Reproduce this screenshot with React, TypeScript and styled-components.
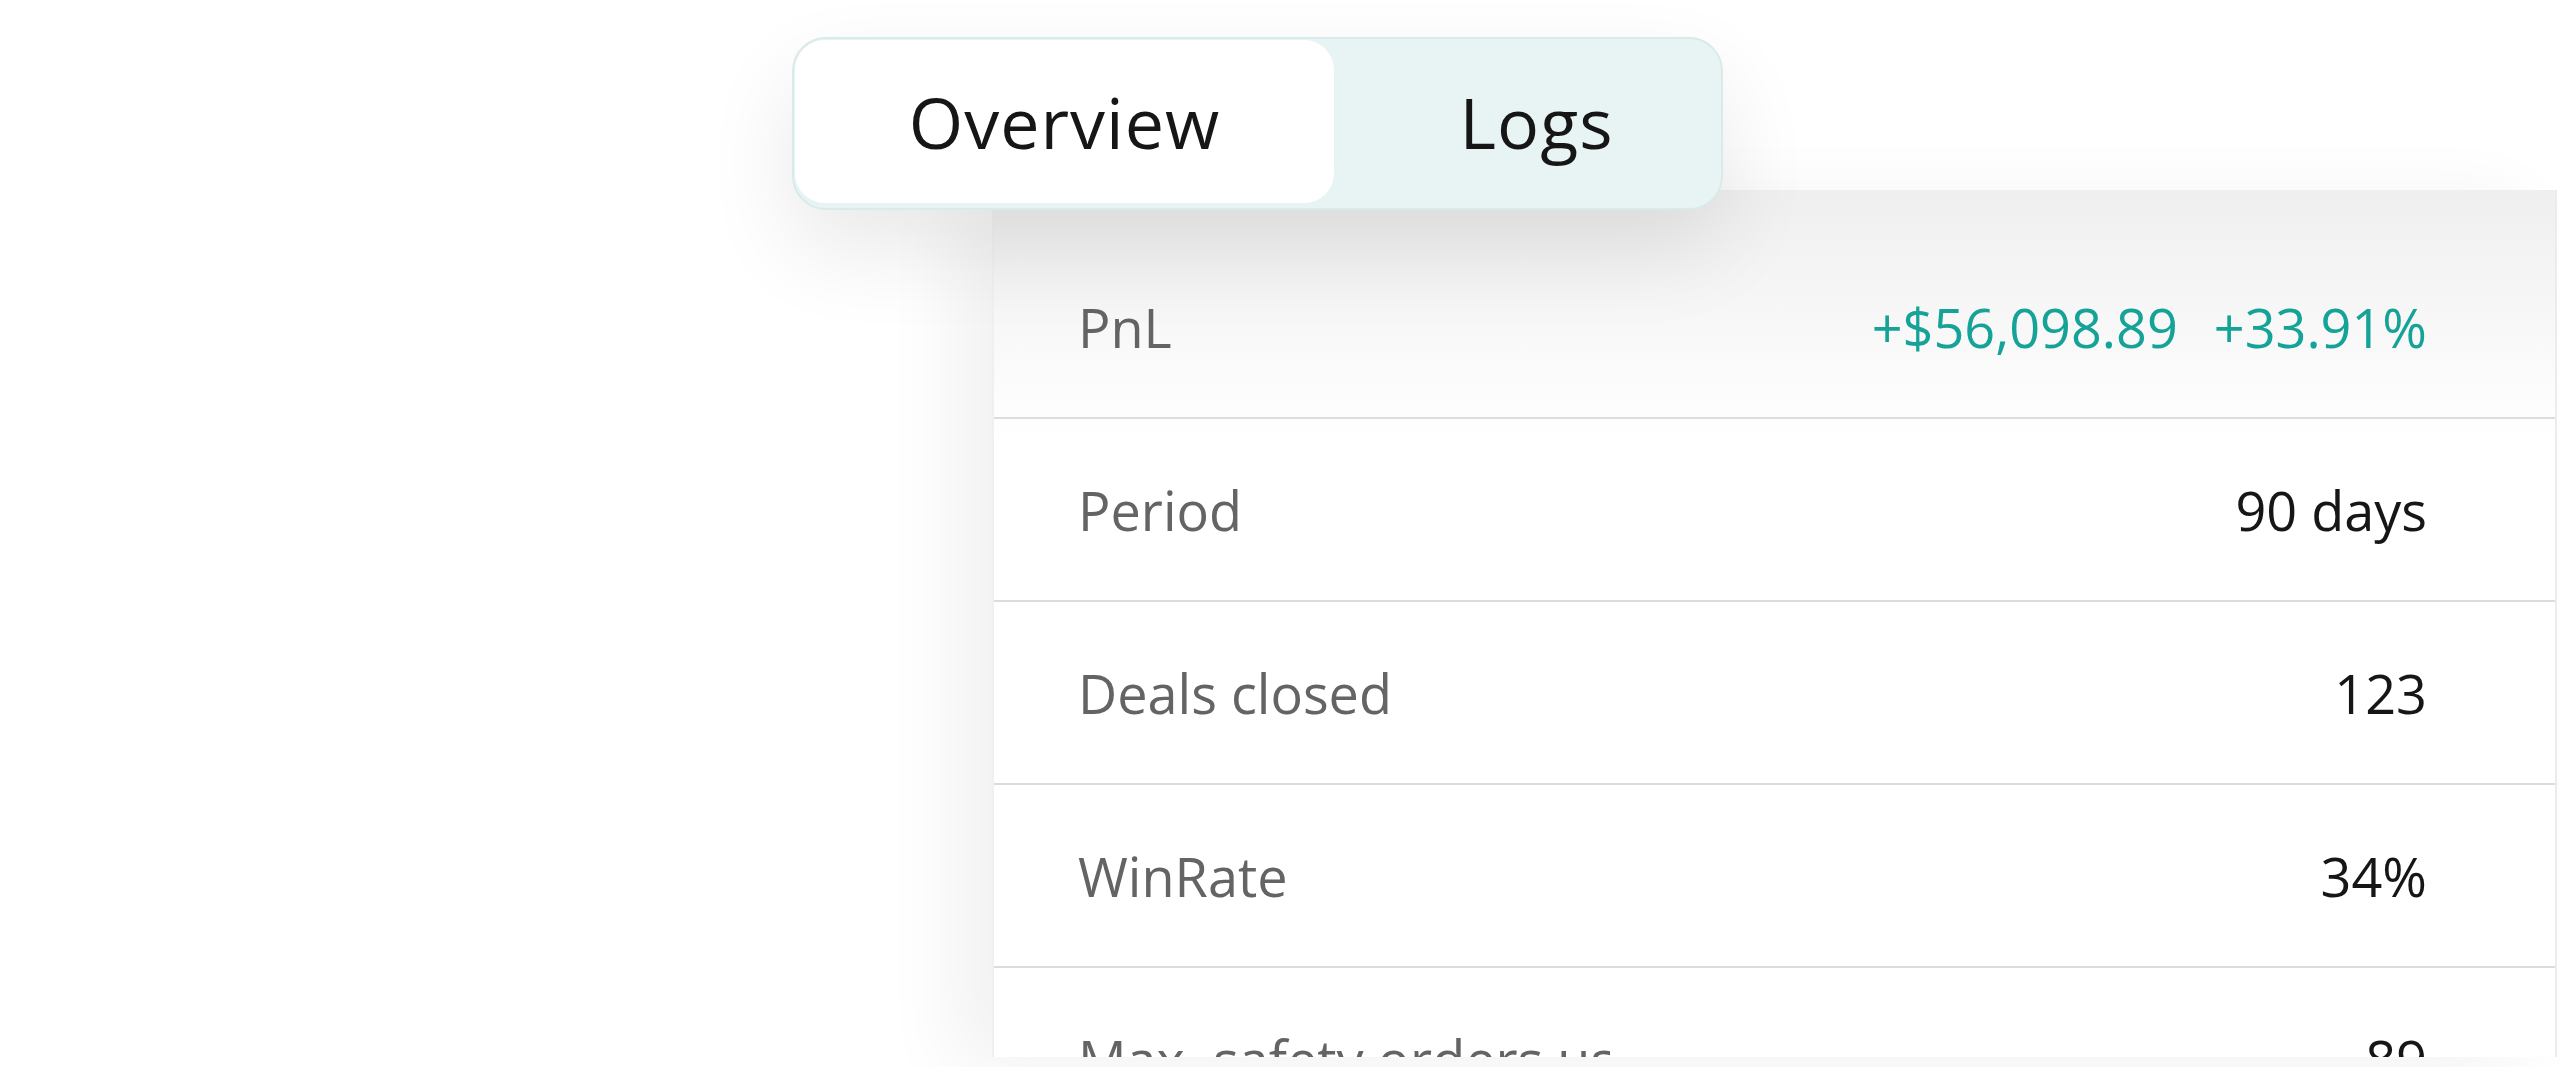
import styled, { createGlobalStyle } from 'styled-components';

const GlobalStyle = createGlobalStyle`
  html, body {
    margin: 0;
    padding: 0;
    background: #ffffff;
    overflow: hidden;
  }
  body {
    font-family: 'Open Sans', 'Noto Sans', sans-serif;
  }
`;

const Stage = styled.div`
  display: flex;
  flex-direction: column;
  align-items: flex-start;
  padding: 37px 0 0 792px;
  height: 1067px;
  box-sizing: border-box;
`;

const TabBar = styled.div`
  position: relative;
  z-index: 2;
  display: flex;
  align-items: flex-start;
  box-sizing: border-box;
  width: 931px;
  height: 173px;
  padding: 1px 0 5px 1px;
  border: 2px solid #d8eaea;
  border-radius: 34px;
  background: #e8f4f4;
  box-shadow: 0 40px 90px rgba(0, 0, 0, 0.09);
`;

const Tab = styled.div<{ $active?: boolean }>`
  display: flex;
  align-items: center;
  justify-content: center;
  box-sizing: border-box;
  height: 163px;
  font-size: 70px;
  letter-spacing: 1px;
  color: #161616;
  border-radius: 30px;
  ${({ $active }) =>
    $active
      ? `
    width: 539px;
    background: #ffffff;
  `
      : `
    flex: 1;
    padding-left: 18px;
    background: transparent;
  `}
`;

const Panel = styled.div`
  position: relative;
  z-index: 1;
  box-sizing: border-box;
  width: 1565px;
  height: 867px;
  margin: -20px 0 0 200px;
  padding-top: 46px;
  overflow: hidden;
  background: linear-gradient(to bottom, #efefef 0px, #f6f6f6 110px, #fcfcfc 200px, #ffffff 250px);
  border-left: 2px solid #f0f0f0;
  border-right: 2px solid #ececec;
  box-shadow: -40px 10px 70px rgba(0, 0, 0, 0.055);
`;

const Row = styled.div`
  display: flex;
  align-items: center;
  justify-content: space-between;
  box-sizing: border-box;
  height: 183px;
  padding: 0 128px 0 84px;
  border-bottom: 2px solid #dcdcdc;
`;

const Label = styled.div`
  max-width: 532px;
  overflow: hidden;
  white-space: nowrap;
  font-size: 54px;
  color: #646464;
`;

const ValueGroup = styled.div`
  display: flex;
  gap: 36px;
`;

const Value = styled.div<{ $positive?: boolean }>`
  font-size: 54px;
  white-space: nowrap;
  color: ${({ $positive }) => ($positive ? '#15a398' : '#161616')};
`;

const stats = [
  { label: 'Period', value: '90 days' },
  { label: 'Deals closed', value: '123' },
  { label: 'WinRate', value: '34%' },
  { label: 'Max. safety orders used', value: '89' },
];

export default function App() {
  return (
    <>
      <GlobalStyle />
      <Stage>
        <TabBar>
          <Tab $active>Overview</Tab>
          <Tab>Logs</Tab>
        </TabBar>
        <Panel>
          <Row>
            <Label>PnL</Label>
            <ValueGroup>
              <Value $positive>+$56,098.89</Value>
              <Value $positive>+33.91%</Value>
            </ValueGroup>
          </Row>
          {stats.map((s) => (
            <Row key={s.label}>
              <Label>{s.label}</Label>
              <Value>{s.value}</Value>
            </Row>
          ))}
        </Panel>
      </Stage>
    </>
  );
}
